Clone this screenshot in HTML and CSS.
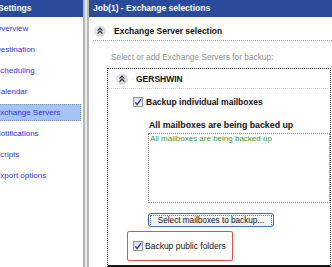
FILE: index.html
```html
<!DOCTYPE html>
<html lang="en">
<head>
    <meta charset="UTF-8">
    <title>Job(1) - Exchange selections</title>
    <link rel="stylesheet" href="styles.css">
</head>
<body>
    <div class="window">
        <div class="sidebar">
            <div class="title-bar">Settings</div>
            <ul class="nav">
                <li>Overview</li>
                <li>Destination</li>
                <li>Scheduling</li>
                <li>Calendar</li>
                <li class="active">Exchange Servers</li>
                <li>Notifications</li>
                <li>Scripts</li>
                <li>Export options</li>
            </ul>
        </div>

        <div class="splitter"></div>

        <div class="main">
            <div class="title-bar">Job(1) - Exchange selections</div>

            <div class="section-head">
                <span class="collapse">
                    <svg width="10" height="10" viewBox="0 0 10 10"><path d="M2.6 4.6 L5 2.2 L7.4 4.6 M2.6 7.6 L5 5.2 L7.4 7.6" fill="none" stroke="#1e1e1e" stroke-width="1.2"/></svg>
                </span>
                Exchange Server selection
            </div>

            <p class="hint">Select or add Exchange Servers for backup:</p>

            <div class="server-box">
                <div class="server-head">
                    <span class="collapse">
                        <svg width="10" height="10" viewBox="0 0 10 10"><path d="M2.6 4.6 L5 2.2 L7.4 4.6 M2.6 7.6 L5 5.2 L7.4 7.6" fill="none" stroke="#1e1e1e" stroke-width="1.2"/></svg>
                    </span>
                    GERSHWIN
                </div>

                <label class="check-row bold">
                    <span class="checkbox">
                        <svg width="8" height="8" viewBox="0 0 8 8"><path d="M1.2 4.2 L3.2 6.6 L7 1.2" fill="none" stroke="#2a3c9c" stroke-width="1.4"/></svg>
                    </span>
                    Backup individual mailboxes
                </label>

                <div class="mailboxes">
                    <h3>All mailboxes are being backed up</h3>
                    <div class="list">All mailboxes are being backed up</div>
                    <button class="btn"><span>Select mailboxes to backup...</span></button>
                </div>

                <div class="public">
                    <label class="check-row">
                        <span class="checkbox">
                            <svg width="8" height="8" viewBox="0 0 8 8"><path d="M1.2 4.2 L3.2 6.6 L7 1.2" fill="none" stroke="#2a3c9c" stroke-width="1.4"/></svg>
                        </span>
                        Backup public folders
                    </label>
                </div>
            </div>
        </div>
    </div>
</body>
</html>
```

FILE: styles.css
```css
body {
    font-family: 'Liberation Sans', Arial, sans-serif;
    font-size: 8.3px;
    margin: 0;
    background-color: #ffffff;
    color: #111;
}

.window {
    display: flex;
    width: 332px;
    height: 267px;
    overflow: hidden;
}

.title-bar {
    height: 17px;
    line-height: 17px;
    background-color: #2a4b9c;
    color: #ffffff;
    font-weight: bold;
    font-size: 8.5px;
    white-space: nowrap;
}

/* left settings panel */
.sidebar {
    width: 83px;
    flex: none;
    overflow: hidden;
}

.sidebar .title-bar {
    text-indent: -2px;
}

.nav {
    list-style: none;
    margin: 0 0 0 -10px;
    padding: 3px 2px 0 0;
}

.nav li {
    height: 15px;
    line-height: 15px;
    padding-left: 4px;
    margin-bottom: 4px;
    border: 1px dotted transparent;
    color: #3434d6;
    font-size: 8px;
    white-space: nowrap;
}

.nav li.active {
    background-color: #a6c3f5;
    border-color: #8090b8;
}

.splitter {
    width: 6px;
    flex: none;
    box-sizing: border-box;
    border-left: 2px solid #b6b6b6;
    border-right: 2px solid #b6b6b6;
    background-color: #e8e8e8;
}

/* right panel */
.main {
    flex: 1;
    min-width: 0;
    display: flex;
    flex-direction: column;
}

.main .title-bar {
    padding-left: 4px;
}

.collapse {
    width: 10px;
    height: 10px;
    flex: none;
    border-radius: 50%;
    background: radial-gradient(circle at 40% 35%, #f4f5f9, #c3c7d6);
    box-shadow: 0 0 0 0.5px #b5b9c9;
    display: flex;
}

.section-head {
    display: flex;
    align-items: center;
    gap: 9px;
    margin-left: 4px;
    padding: 9px 0 4px 2px;
    line-height: 10px;
    font-weight: bold;
    font-size: 8.5px;
    border-bottom: 1px dotted #a4a4a4;
}

.hint {
    margin: 11px 0 6px 22px;
    line-height: 10px;
    color: #8c8c8c;
}

.server-box {
    flex: 1;
    margin: 0 1px 0 18px;
    border: 1px dotted #2e2e2e;
    border-bottom: 2px solid #161616;
    padding-bottom: 4px;
}

.server-head {
    display: flex;
    align-items: center;
    gap: 9px;
    padding: 5px 0 4px 9px;
    line-height: 10px;
    font-weight: bold;
    font-size: 8.5px;
    border-bottom: 1px dotted #cfcfcf;
}

.check-row {
    display: flex;
    align-items: center;
    gap: 3px;
    line-height: 10px;
    white-space: nowrap;
}

.server-box > .check-row {
    margin: 8px 0 0 25px;
}

.bold {
    font-weight: bold;
    font-size: 8.5px;
}

.checkbox {
    width: 10px;
    height: 10px;
    flex: none;
    box-sizing: border-box;
    border: 1px solid #8e92a6;
    background: linear-gradient(135deg, #dcdde6, #f8f8fb);
    display: flex;
    align-items: center;
    justify-content: center;
}

.mailboxes {
    margin-left: 40px;
}

.mailboxes h3 {
    margin: 12px 0 0 1px;
    font-size: 8.8px;
    line-height: 12px;
    white-space: nowrap;
}

.list {
    margin-top: 2px;
    height: 70px;
    box-sizing: border-box;
    border: 1px dotted #8e8e8e;
    padding: 0 1px;
    line-height: 10px;
    font-size: 8px;
    color: #3a9c3a;
}

.btn {
    display: block;
    margin-top: 10px;
    width: 126px;
    height: 14px;
    padding: 1px;
    border: 1px solid #3b68c2;
    border-radius: 3px;
    background: linear-gradient(#ffffff, #eceef3);
    font-family: inherit;
    font-size: 8.2px;
    color: #111;
}

.btn span {
    display: block;
    height: 10px;
    line-height: 10px;
    border: 1px dotted #7a7a7a;
}

.public {
    margin: 4px 0 0 19px;
    width: 106px;
    height: 30px;
    box-sizing: border-box;
    border: 1px solid #e05252;
    border-radius: 2px;
    padding-left: 5px;
    display: flex;
    align-items: center;
}

.public .check-row {
    gap: 2px;
    font-size: 8.5px;
}
```
